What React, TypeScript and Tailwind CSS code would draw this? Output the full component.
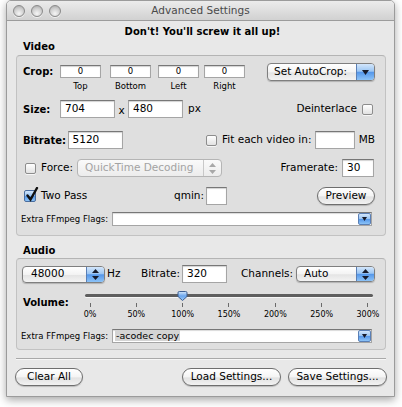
import React from 'react';

const aqua =
  'bg-[linear-gradient(to_bottom,#d3e6fb_0%,#9cc6f3_45%,#5597ea_52%,#8cc3f7_100%)]';

function Field({ w, h = 18, value, center, small }: { w: string; h?: number; value?: string; center?: boolean; small?: boolean }) {
  return (
    <div
      className={`${w} ${h === 13 ? 'h-[13px]' : h === 14 ? 'h-[14px]' : 'h-[18px]'} bg-white border border-[#a5a5a5] border-t-[#777] shadow-[inset_0_1px_1px_rgba(0,0,0,0.18)] flex items-center ${center ? 'justify-center' : 'pl-[4px]'} ${small ? 'text-[8.5px]' : 'text-[10.5px]'} text-black`}
    >
      {value}
    </div>
  );
}

function Check({ checked }: { checked?: boolean }) {
  if (checked) {
    return (
      <div className={`relative w-[12px] h-[12px] rounded-[2px] border border-[#4a6d9e] ${aqua}`}>
        <svg className="absolute left-[1px] top-[-4px]" width="13" height="15" viewBox="0 0 13 15">
          <path d="M1.5 8.5 L4.5 12.5 L11 1" fill="none" stroke="#111" strokeWidth="2.4" strokeLinecap="round" />
        </svg>
      </div>
    );
  }
  return (
    <div className="w-[11px] h-[11px] rounded-[2px] border border-[#8d8d8d] bg-linear-to-b from-white to-[#e2e2e2] shadow-[0_1px_0_rgba(255,255,255,0.7)]" />
  );
}

function DownArrow({ color = '#161a2a' }: { color?: string }) {
  return (
    <svg width="7" height="5" viewBox="0 0 7 5">
      <path d="M0 0H7L3.5 5Z" fill={color} />
    </svg>
  );
}

function UpDown({ color = '#161a2a' }: { color?: string }) {
  return (
    <svg width="7" height="11" viewBox="0 0 7 11">
      <path d="M3.5 0L7 4H0Z M0 7H7L3.5 11Z" fill={color} />
    </svg>
  );
}

function RoundButton({ w, label }: { w: string; label: string }) {
  return (
    <div
      className={`${w} h-[18px] rounded-full border border-[#6e6e6e] bg-[linear-gradient(to_bottom,#ffffff_0%,#f4f4f4_50%,#e2e2e2_55%,#f2f2f2_100%)] shadow-[0_1px_1px_rgba(0,0,0,0.2)] flex items-center justify-center text-[10.5px] text-black`}
    >
      {label}
    </div>
  );
}

function Combo({ w, value }: { w: string; value?: string }) {
  return (
    <div
      className={`${w} h-[14px] bg-white border border-[#a5a5a5] border-t-[#777] shadow-[inset_0_1px_1px_rgba(0,0,0,0.15)] flex items-center`}
    >
      <div className="flex-1 pl-[2px] text-[9.5px] text-black">
        {value && <span className="bg-[#d4d4d4] px-[1px]">{value}</span>}
      </div>
      <div className={`w-[13px] h-[12px] rounded-[2px] border border-[#5a7fb5] ${aqua} flex items-center justify-center`}>
        <svg width="5" height="4" viewBox="0 0 5 4">
          <path d="M0 0H5L2.5 4Z" fill="#161a2a" />
        </svg>
      </div>
    </div>
  );
}

const ticks = ['0%', '50%', '100%', '150%', '200%', '250%', '300%'];

export default function App() {
  return (
    <div className="w-[402px] h-[407px] bg-white overflow-hidden font-['DejaVu_Sans',sans-serif] text-[10.5px] text-black">
      <div className="ml-[6px] w-[389px] h-[397px] flex flex-col rounded-t-[5px] border border-[#9b9b9b] bg-[#e8e8e8] shadow-[0_3px_8px_rgba(0,0,0,0.35)] overflow-hidden">
        {/* title bar */}
        <div className="h-[20px] shrink-0 flex items-center border-b border-[#9c9c9c] bg-linear-to-b from-[#ececec] to-[#d1d1d1]">
          <div className="w-[66px] flex items-center gap-[6px] pl-[6px]">
            {[0, 1, 2].map((i) => (
              <div
                key={i}
                className="w-[12px] h-[12px] rounded-full border border-[#8a8a8a] bg-[radial-gradient(circle_at_50%_75%,#f6f6f6_0%,#cfcfcf_55%,#a3a3a3_100%)] shadow-[0_1px_0_rgba(255,255,255,0.6)]"
              />
            ))}
          </div>
          <div className="flex-1 text-center text-[10.5px] text-[#4a4a4a]">Advanced Settings</div>
          <div className="w-[66px]" />
        </div>

        <div className="mt-[4px] h-[14px] leading-[14px] text-center font-bold text-[10px] pl-[4px]">
          Don't! You'll screw it all up!
        </div>
        <div className="mt-[1px] ml-[16px] leading-[14px] h-[14px] font-bold text-[10px]">Video</div>

        {/* video box */}
        <div className="mt-[1px] ml-[9px] w-[370px] rounded-[4px] border border-[#c2c2c2] border-t-[#b4b4b4] bg-[#dfdfdf] pl-[6px] pr-[10px] pt-[7px] pb-[9px] flex flex-col">
          {/* crop */}
          <div className="h-[29px] flex items-start">
            <div className="w-[37px] mt-[2px] leading-[14px] font-bold text-[10px]">Crop:</div>
            {[
              ['Top', ''],
              ['Bottom', 'ml-[9px]'],
              ['Left', 'ml-[7px]'],
              ['Right', 'ml-[5px]'],
            ].map(([l, m]) => (
              <div key={l} className={`w-[41px] flex flex-col ${m}`}>
                <div className="mt-[2px]">
                  <Field w="w-[41px]" h={13} value="0" center small />
                </div>
                <div className="mt-[3px] leading-[11px] text-[8.5px] text-center">{l}</div>
              </div>
            ))}
            <div className="ml-auto w-[108px] h-[18px] rounded-[4px] border border-[#7f7f7f] bg-[linear-gradient(to_bottom,#ffffff_0%,#f3f3f3_50%,#e4e4e4_55%,#f3f3f3_100%)] shadow-[0_1px_1px_rgba(0,0,0,0.2)] flex items-stretch overflow-hidden">
              <div className="flex-1 pl-[6px] flex items-center text-[10.5px]">Set AutoCrop:</div>
              <div className={`w-[18px] border-l border-[#5a7fb5] ${aqua} flex items-center justify-center`}>
                <DownArrow />
              </div>
            </div>
          </div>

          {/* size */}
          <div className="mt-[8px] h-[18px] flex items-center">
            <div className="w-[37px] font-bold text-[10px]">Size:</div>
            <Field w="w-[55px]" value="704" />
            <div className="w-[13px] text-center mt-[3px]">x</div>
            <Field w="w-[55px]" value="480" />
            <div className="ml-[5px]">px</div>
            <div className="ml-auto">Deinterlace</div>
            <div className="ml-[5px] mr-[2px]">
              <Check />
            </div>
          </div>

          {/* bitrate */}
          <div className="mt-[13px] h-[18px] flex items-center">
            <div className="w-[45px] font-bold text-[10px]">Bitrate:</div>
            <Field w="w-[56px]" value="5120" />
            <div className="ml-[83px]">
              <Check />
            </div>
            <div className="ml-[5px] w-[94px] whitespace-nowrap">Fit each video in:</div>
            <Field w="w-[40px]" />
            <div className="ml-[4px]">MB</div>
          </div>

          {/* force */}
          <div className="mt-[10px] h-[18px] flex items-center">
            <div className="ml-[2px]">
              <Check />
            </div>
            <div className="ml-[5px] w-[36px]">Force:</div>
            <div className="w-[145px] h-[18px] rounded-[4px] border border-[#b5b5b5] bg-linear-to-b from-[#fafafa] to-[#ececec] flex items-stretch overflow-hidden">
              <div className="flex-1 pl-[7px] flex items-center text-[#a3a3a3]">QuickTime Decoding</div>
              <div className="w-[18px] border-l border-[#c8c8c8] flex items-center justify-center">
                <UpDown color="#a8a8a8" />
              </div>
            </div>
            <div className="ml-auto">Framerate:</div>
            <div className="ml-[4px] mr-[1px]">
              <Field w="w-[32px]" value="30" />
            </div>
          </div>

          {/* two pass */}
          <div className="mt-[10px] h-[17px] flex items-center">
            <div className="w-[151px] flex items-center">
              <div className="ml-[1px]">
                <Check checked />
              </div>
              <div className="ml-[5px]">Two Pass</div>
            </div>
            <div className="w-[32px]">qmin:</div>
            <Field w="w-[21px]" />
            <div className="ml-auto">
              <RoundButton w="w-[58px]" label="Preview" />
            </div>
          </div>

          {/* extra flags */}
          <div className="mt-[8px] h-[14px] flex items-center">
            <div className="ml-[-2px] w-[91px] text-[8.5px] whitespace-nowrap">Extra FFmpeg Flags:</div>
            <Combo w="w-[260px]" />
          </div>
        </div>

        <div className="mt-[8px] ml-[16px] leading-[14px] h-[14px] font-bold text-[10px]">Audio</div>

        {/* audio box */}
        <div className="ml-[9px] w-[370px] rounded-[4px] border border-[#c2c2c2] border-t-[#b4b4b4] bg-[#dfdfdf] pl-[6px] pr-[10px] pt-[6px] pb-[6px] flex flex-col">
          <div className="h-[18px] flex items-center">
            <div className={`ml-[-1px] w-[83px] h-[17px] rounded-[4px] border border-[#7f7f7f] bg-[linear-gradient(to_bottom,#ffffff_0%,#f3f3f3_50%,#e4e4e4_55%,#f3f3f3_100%)] shadow-[0_1px_1px_rgba(0,0,0,0.2)] flex items-stretch overflow-hidden`}>
              <div className="flex-1 pl-[8px] flex items-center">48000</div>
              <div className={`w-[18px] border-l border-[#5a7fb5] ${aqua} flex items-center justify-center`}>
                <UpDown />
              </div>
            </div>
            <div className="w-[36px] pl-[2px]">Hz</div>
            <div className="w-[41px]">Bitrate:</div>
            <Field w="w-[45px]" value="320" />
            <div className="ml-[14px] w-[55px]">Channels:</div>
            <div className="w-[79px] h-[16px] rounded-[4px] border border-[#7f7f7f] bg-[linear-gradient(to_bottom,#ffffff_0%,#f3f3f3_50%,#e4e4e4_55%,#f3f3f3_100%)] shadow-[0_1px_1px_rgba(0,0,0,0.2)] flex items-stretch overflow-hidden">
              <div className="flex-1 pl-[7px] flex items-center">Auto</div>
              <div className={`w-[18px] border-l border-[#5a7fb5] ${aqua} flex items-center justify-center`}>
                <UpDown />
              </div>
            </div>
          </div>

          {/* volume */}
          <div className="mt-[8px] flex items-start">
            <div className="w-[62px] mt-[5px] leading-[13px] font-bold text-[10px]">Volume:</div>
            <div className="w-[288px] flex flex-col">
              <div className="relative h-[8px]">
                <div className="absolute left-0 right-0 top-[3px] h-[3px] rounded-full bg-[#5e5e5e] shadow-[0_1px_0_rgba(255,255,255,0.7)]" />
                <svg className="absolute left-[92px] top-[0px]" width="11" height="10" viewBox="0 0 11 10">
                  <defs>
                    <linearGradient id="kn" x1="0" y1="0" x2="0" y2="1">
                      <stop offset="0" stopColor="#d6e8fb" />
                      <stop offset="0.5" stopColor="#6aa6ee" />
                      <stop offset="1" stopColor="#9ccbf7" />
                    </linearGradient>
                  </defs>
                  <path d="M1 1.8Q1 0.5 2.3 0.5H8.7Q10 0.5 10 1.8V5.5L5.5 9.5L1 5.5Z" fill="url(#kn)" stroke="#3d5f92" strokeWidth="1" />
                </svg>
              </div>
              <div className="mt-[4px] h-[4px] flex justify-between">
                {ticks.map((t) => (
                  <div key={t} className="w-[10px] flex justify-center">
                    <div className="w-[1px] h-[4px] bg-[#6a6a6a]" />
                  </div>
                ))}
              </div>
              <div className="mt-[3px] h-[10px] leading-[10px] flex justify-between text-[8px]">
                {ticks.map((t) => (
                  <div key={t} className="w-[10px] flex justify-center whitespace-nowrap">
                    {t}
                  </div>
                ))}
              </div>
            </div>
          </div>

          <div className="mt-[9px] h-[14px] flex items-center">
            <div className="ml-[-2px] w-[91px] text-[8.5px] whitespace-nowrap">Extra FFmpeg Flags:</div>
            <Combo w="w-[260px]" value="-acodec copy" />
          </div>
        </div>

        <div className="mt-[8px] ml-[9px] w-[370px] h-[2px] border-t border-[#a9a9a9] border-b border-b-[#f6f6f6]" />

        <div className="mt-[8px] h-[18px] flex items-center">
          <div className="ml-[8px]">
            <RoundButton w="w-[68px]" label="Clear All" />
          </div>
          <div className="ml-auto">
            <RoundButton w="w-[99px]" label="Load Settings..." />
          </div>
          <div className="ml-[7px] mr-[7px]">
            <RoundButton w="w-[99px]" label="Save Settings..." />
          </div>
        </div>
      </div>
    </div>
  );
}
